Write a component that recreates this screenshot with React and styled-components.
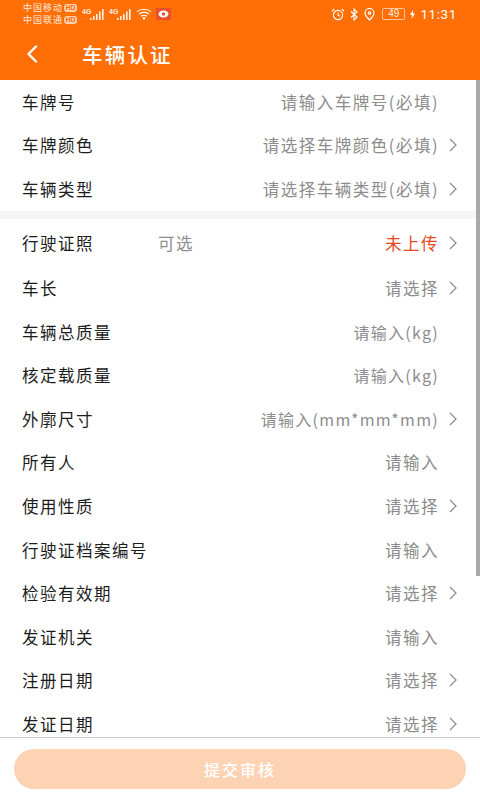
import React from 'react'
import styled, { createGlobalStyle } from 'styled-components'

const FONT = `"Noto Sans CJK SC", "Noto Sans", sans-serif`

const GlobalStyle = createGlobalStyle`
  html, body {
    margin: 0;
    padding: 0;
    background: #fff;
    font-family: ${FONT};
  }
`

const Page = styled.div`
  width: 480px;
  height: 800px;
  display: flex;
  flex-direction: column;
  overflow: hidden;
  position: relative;
`

const Header = styled.header`
  height: 80px;
  flex: none;
  background: #ff6f06;
  color: #fff;
  display: flex;
  flex-direction: column;
`

const StatusBar = styled.div`
  height: 28px;
  display: flex;
  align-items: center;
  padding: 0 23px 0 23px;
`

const Carriers = styled.div`
  display: flex;
  flex-direction: column;
  gap: 2px;
  font-size: 9px;
  line-height: 10px;
  letter-spacing: 1px;
  opacity: 0.85;
`

const Carrier = styled.div`
  display: flex;
  align-items: center;
  gap: 1px;
  white-space: nowrap;
`

const HdBadge = styled.span`
  width: 13px;
  height: 8px;
  border-radius: 3px;
  background: rgba(255, 255, 255, 0.8);
  color: #ff6f06;
  font: 700 7px/8px "Liberation Sans", sans-serif;
  letter-spacing: 0;
  text-align: center;
`

const Signals = styled.div`
  display: flex;
  align-items: center;
  gap: 4px;
  margin-left: 5px;
`

const NewsBadge = styled.span`
  width: 15px;
  height: 12px;
  background: #e8502c;
  display: flex;
  align-items: center;
  justify-content: center;
`

const StatusRight = styled.div`
  margin-left: auto;
  display: flex;
  align-items: center;
  gap: 5px;
`

const Battery = styled.span`
  width: 21px;
  height: 10px;
  border: 1px solid rgba(255, 255, 255, 0.65);
  border-radius: 2px;
  font: 10px/10px "Liberation Sans", sans-serif;
  text-align: center;
  opacity: 0.9;
  margin-left: 2px;
`

const Clock = styled.span`
  font: 13.5px/16px Roboto, sans-serif;
  letter-spacing: 0.6px;
`

const TitleBar = styled.div`
  flex: 1;
  display: flex;
  align-items: center;
  padding: 0 0 1px 26px;
`

const Title = styled.h1`
  margin: 0 0 0 44px;
  font-size: 20.5px;
  line-height: 24px;
  font-weight: 500;
  letter-spacing: 2.2px;
`

const Form = styled.main`
  flex: 1;
  min-height: 0;
  overflow: hidden;
`

const Group = styled.section`
  border-bottom: ${props => (props.$divider ? '8px solid #f5f5f5' : 'none')};
`

const Row = styled.div`
  height: ${props => props.$height || 43.6}px;
  display: flex;
  align-items: center;
  padding: 0 22px;
`

const Label = styled.span`
  color: #1c1c1c;
  font-size: 16.5px;
  letter-spacing: 1.5px;
`

const Hint = styled.span`
  color: #8c8c8c;
  font-size: 16.5px;
  letter-spacing: 1.5px;
  margin-left: 64px;
`

const Value = styled.span`
  margin-left: auto;
  margin-right: ${props => (props.$arrow ? 9 : 19)}px;
  color: ${props => (props.$alert ? '#e4491c' : '#8c8c8c')};
  font-size: ${props => (props.$tight ? 16 : 16.5)}px;
  letter-spacing: ${props => (props.$tight ? 1.3 : 1.5)}px;
  white-space: nowrap;
`

const Footer = styled.footer`
  height: 63px;
  flex: none;
  box-sizing: border-box;
  border-top: 1px solid #c9c9c9;
  padding: 11px 14px 0;
  background: #fff;
`

const Submit = styled.button`
  width: 100%;
  height: 40px;
  border: 0;
  border-radius: 20px;
  background: #fdd3b3;
  color: #fff;
  font-family: ${FONT};
  font-size: 16px;
  font-weight: 500;
  letter-spacing: 2px;
`

const ScrollThumb = styled.div`
  position: absolute;
  top: 80px;
  right: 0;
  width: 4px;
  height: 496px;
  background: #a9a9a9;
`

const Chevron = () => (
  <svg width="10" height="14" viewBox="0 0 10 14" fill="none" stroke="#8a8a8a" strokeWidth="1.2">
    <path d="M2 1l6 6-6 6" />
  </svg>
)

const BackIcon = () => (
  <svg width="12" height="18" viewBox="0 0 12 18" fill="none" stroke="#fff" strokeWidth="2.4" strokeLinecap="round" strokeLinejoin="round">
    <path d="M10 1.5L2.5 9l7.5 7.5" />
  </svg>
)

const SignalIcon = () => (
  <svg width="23" height="13" viewBox="0 0 23 13" fill="#fff" opacity="0.9">
    <text x="0" y="6" fontSize="7" fontWeight="700" fontFamily="Liberation Sans">4G</text>
    <rect x="8" y="10" width="1.6" height="2" />
    <rect x="11" y="8" width="1.6" height="4" />
    <rect x="14" y="6" width="1.6" height="6" />
    <rect x="17" y="3.5" width="1.6" height="8.5" />
    <rect x="20" y="1" width="1.6" height="11" />
  </svg>
)

const WifiIcon = () => (
  <svg width="16" height="12" viewBox="0 0 16 12" fill="none" stroke="#fff" strokeWidth="1.1">
    <path d="M1 3.6c4-3.2 10-3.2 14 0M3 6c3-2.2 7-2.2 10 0M5 8.2c1.800-1.200 4.200-1.200 6 0" />
    <circle cx="8" cy="10.300" r="0.800" fill="#fff" />
  </svg>
)

const EyeIcon = () => (
  <svg width="11" height="8" viewBox="0 0 11 8">
    <ellipse cx="5.500" cy="4" rx="5" ry="3.500" fill="#fff" />
    <circle cx="5.500" cy="4" r="1.700" fill="#e8502c" />
  </svg>
)

const AlarmIcon = () => (
  <svg width="14" height="13" viewBox="0 0 14 13" fill="none" stroke="#fff" strokeWidth="1.1">
    <circle cx="7" cy="7" r="4.600" />
    <path d="M7 4.500V7l1.800 1.200M1 3.200L3.200 1M13 3.200L10.800 1" />
  </svg>
)

const BluetoothIcon = () => (
  <svg width="9" height="13" viewBox="0 0 9 13" fill="none" stroke="#fff" strokeWidth="1.1">
    <path d="M1 3.500l6 5.500-3 3V1l3 3-6 5.500" />
  </svg>
)

const LocationIcon = () => (
  <svg width="11" height="13" viewBox="0 0 11 13" fill="none" stroke="#fff" strokeWidth="1.2">
    <path d="M5.500 12C3 9.500 1 7.500 1 5a4.500 4.500 0 0 1 9 0c0 2.500-2 4.500-4.500 7z" />
    <circle cx="5.500" cy="5" r="1.200" />
  </svg>
)

const BoltIcon = () => (
  <svg width="5" height="9" viewBox="0 0 5 9" fill="#fff">
    <path d="M3 0L0 5h2L1.600 9 5 3.600H3z" />
  </svg>
)

const vehicleRows = [
  { label: '车牌号', value: '请输入车牌号(必填)' },
  { label: '车牌颜色', value: '请选择车牌颜色(必填)', arrow: true },
  { label: '车辆类型', value: '请选择车辆类型(必填)', arrow: true },
]

const licenseRows = [
  { label: '车长', value: '请选择', arrow: true },
  { label: '车辆总质量', value: '请输入(kg)', tight: true },
  { label: '核定载质量', value: '请输入(kg)', tight: true },
  { label: '外廓尺寸', value: '请输入(mm*mm*mm)', arrow: true, tight: true },
  { label: '所有人', value: '请输入' },
  { label: '使用性质', value: '请选择', arrow: true },
  { label: '行驶证档案编号', value: '请输入' },
  { label: '检验有效期', value: '请选择', arrow: true },
  { label: '发证机关', value: '请输入' },
  { label: '注册日期', value: '请选择', arrow: true },
  { label: '发证日期', value: '请选择', arrow: true },
]

function FormRow({ label, value, arrow, tight }) {
  return (
    <Row>
      <Label>{label}</Label>
      <Value $arrow={arrow} $tight={tight}>{value}</Value>
      {arrow && <Chevron />}
    </Row>
  )
}

function App() {
  return (
    <Page>
      <GlobalStyle />
      <Header>
        <StatusBar>
          <Carriers>
            <Carrier>中国移动<HdBadge>HD</HdBadge></Carrier>
            <Carrier>中国联通<HdBadge>HD</HdBadge></Carrier>
          </Carriers>
          <Signals>
            <SignalIcon />
            <SignalIcon />
            <WifiIcon />
            <NewsBadge><EyeIcon /></NewsBadge>
          </Signals>
          <StatusRight>
            <AlarmIcon />
            <BluetoothIcon />
            <LocationIcon />
            <Battery>49</Battery>
            <BoltIcon />
            <Clock>11:31</Clock>
          </StatusRight>
        </StatusBar>
        <TitleBar>
          <BackIcon />
          <Title>车辆认证</Title>
        </TitleBar>
      </Header>
      <Form>
        <Group $divider>
          {vehicleRows.map(row => <FormRow key={row.label} {...row} />)}
        </Group>
        <Row $height={47.5}>
          <Label>行驶证照</Label>
          <Hint>可选</Hint>
          <Value $arrow $alert>未上传</Value>
          <Chevron />
        </Row>
        {licenseRows.map(row => <FormRow key={row.label} {...row} />)}
      </Form>
      <Footer>
        <Submit>提交审核</Submit>
      </Footer>
      <ScrollThumb />
    </Page>
  )
}

export default App
